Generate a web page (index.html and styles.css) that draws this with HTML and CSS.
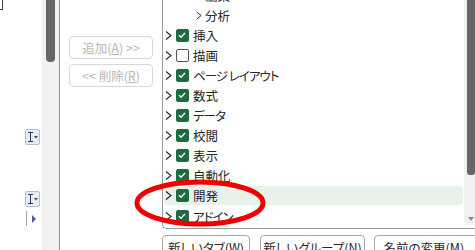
FILE: index.html
```html
<!DOCTYPE html>
<html lang="ja">
<head>
    <meta charset="UTF-8">
    <title>リボンのユーザー設定</title>
    <link rel="stylesheet" href="styles.css">
</head>
<body>
    <div class="side">
        <div class="corner"></div>
        <div class="ibeam first">
            <svg width="15" height="16" viewBox="0 0 15 16"><path d="M3 3.5h5M3 12.5h5M5.5 3.5v9" stroke="#2c3560" stroke-width="1" fill="none"/><path d="M9 7h4l-2 2.5z" fill="#3a4a8a"/></svg>
        </div>
        <div class="ibeam">
            <svg width="15" height="16" viewBox="0 0 15 16"><path d="M3 3.5h5M3 12.5h5M5.5 3.5v9" stroke="#2c3560" stroke-width="1" fill="none"/><path d="M9 7h4l-2 2.5z" fill="#3a4a8a"/></svg>
        </div>
        <div class="expander">
            <span class="rule"></span>
            <svg width="5" height="8" viewBox="0 0 5 8"><path d="M0 0l4 4-4 4z" fill="#4a5a9a"/></svg>
        </div>
    </div>
    <div class="vscroll"><div class="thumb"></div></div>
    <div class="divider"></div>
    <div class="move-buttons">
        <button class="move" disabled>追加(<u>A</u>) &gt;&gt;</button>
        <button class="move" disabled>&lt;&lt; 削除(<u>R</u>)</button>
    </div>
    <div class="tabs-panel">
        <div class="tree-box">
            <ul class="tree" id="tree"></ul>
            <div class="tree-scroll">
                <div class="thumb"></div>
                <span class="arrow"></span>
            </div>
        </div>
        <div class="actions">
            <button class="act new-tab">新しいタブ(<u>W</u>)</button>
            <button class="act new-group">新しいグループ(<u>N</u>)</button>
            <button class="act rename">名前の変更(<u>M</u>)...</button>
        </div>
    </div>
    <svg class="callout" width="140" height="54" viewBox="0 0 140 54">
        <ellipse cx="66" cy="25" rx="63" ry="21" fill="none" stroke="#ee0000" stroke-width="5"/>
    </svg>
    <script>
        const items = [
            { name: '編集', sub: true },
            { name: '分析', sub: true },
            { name: '挿入', on: true },
            { name: '描画', on: false },
            { name: 'ページ レイアウト', on: true, kana: true },
            { name: '数式', on: true },
            { name: 'データ', on: true, kana: true },
            { name: '校閲', on: true },
            { name: '表示', on: true },
            { name: '自動化', on: true },
            { name: '開発', on: true, selected: true },
            { name: 'アドイン', on: true, kana: true },
            { name: 'ヘルプ', on: true, kana: true }
        ];
        const chevron = '<svg class="chev" width="7" height="9" viewBox="0 0 7 9"><path d="M1 0.5l5 4-5 4" fill="none" stroke="#222" stroke-width="1.1"/></svg>';
        const tick = '<svg width="12" height="12" viewBox="0 0 12 12"><path d="M3 6.2l2 2 4-4.3" fill="none" stroke="#fff" stroke-width="1.4"/></svg>';
        const tree = document.getElementById('tree');
        items.forEach(item => {
            const li = document.createElement('li');
            li.className = item.sub ? 'row sub' : 'row';
            if (item.selected) li.classList.add('selected');
            let box = '';
            if (!item.sub) {
                box = item.on ? `<span class="check on">${tick}</span>` : '<span class="check"></span>';
            }
            const labelClass = item.kana ? 'label kana' : 'label';
            li.innerHTML = `${chevron}${box}<span class="${labelClass}">${item.name}</span>`;
            tree.appendChild(li);
        });
    </script>
</body>
</html>
```

FILE: styles.css
```css
body {
    margin: 0;
    width: 475px;
    height: 250px;
    overflow: hidden;
    display: flex;
    background: #fff;
    font-family: "Noto Sans CJK JP", "Noto Sans", sans-serif;
    font-feature-settings: "palt";
    font-size: 12px;
    color: #262626;
}
.side {
    width: 42px;
    flex-shrink: 0;
    display: flex;
    flex-direction: column;
    align-items: flex-start;
}
.corner {
    width: 2px;
    height: 9px;
    border-right: 1px solid #444;
    border-bottom: 1px solid #444;
}
.ibeam {
    margin-left: 25px;
    margin-top: 46px;
    width: 13px;
    height: 14px;
    border: 1px solid #b6bccb;
    border-radius: 2px;
    background: #e9ecf3;
    display: flex;
}
.ibeam svg {
    margin: -1px;
}
.ibeam.first {
    margin-top: 119px;
}
.expander {
    margin-left: 26px;
    margin-top: 4px;
    display: flex;
    align-items: center;
    gap: 5px;
}
.expander .rule {
    width: 1px;
    height: 15px;
    background: #a8a8a8;
}
.vscroll {
    width: 17px;
    flex-shrink: 0;
    background: #f1f1f1;
}
.vscroll .thumb {
    margin-left: 4px;
    width: 9px;
    height: 62px;
    background: #666;
    border-radius: 0 0 4px 4px;
}
.divider {
    width: 1px;
    flex-shrink: 0;
    background: #8c8c8c;
}
.move-buttons {
    width: 102px;
    flex-shrink: 0;
    display: flex;
    flex-direction: column;
    gap: 5px;
    padding-top: 36px;
    padding-left: 9px;
    box-sizing: border-box;
}
button {
    font-family: inherit;
    font-feature-settings: "palt";
    font-size: 12px;
    background: #fff;
    padding: 0;
    margin: 0;
}
.move {
    width: 84px;
    height: 23px;
    border: 1px solid #d8d8d8;
    border-radius: 4px;
    color: #b8b8b8;
    font-size: 12.5px;
}
.tabs-panel {
    width: 313px;
    flex-shrink: 0;
    display: flex;
    flex-direction: column;
}
.tree-box {
    height: 229px;
    flex-shrink: 0;
    box-sizing: border-box;
    border-left: 1px solid #9a9a9a;
    border-bottom: 1px solid #9a9a9a;
    border-bottom-left-radius: 5px;
    display: flex;
    overflow: hidden;
}
.tree {
    list-style: none;
    margin: -15px 0 0;
    padding: 0;
    flex: 1;
}
.row {
    height: 19px;
    margin: 1px;
    padding-left: 1px;
    display: flex;
    align-items: center;
    border-radius: 4px;
}
.row.selected {
    background: #e7f2eb;
    margin-top: 0;
    margin-bottom: 2px;
}
.row.sub {
    padding-left: 32px;
}
.chev {
    flex-shrink: 0;
    margin-right: 4px;
}
.row.sub .chev {
    width: 6px;
    margin-right: 3px;
}
.check {
    width: 11px;
    height: 11px;
    border: 1px solid #555;
    border-radius: 2px;
    margin-right: 4px;
    display: flex;
    flex-shrink: 0;
    background: #fff;
}
.check.on {
    background: #1d6b3f;
    border-color: #1d6b3f;
}
.check.on svg {
    margin: -1px;
}
.label {
    white-space: nowrap;
    line-height: 19px;
    font-size: 12.5px;
}
.label.kana {
    letter-spacing: -1px;
}
.tree-scroll {
    width: 11px;
    flex-shrink: 0;
    height: 225px;
    background: #f1f1f1;
    border-bottom-left-radius: 4px;
    position: relative;
}
.tree-scroll .thumb {
    margin-left: 3px;
    width: 8px;
    height: 175px;
    background: #666;
    border-radius: 0 0 3px 3px;
}
.tree-scroll .arrow {
    position: absolute;
    left: 4px;
    bottom: 4px;
    border-left: 3px solid transparent;
    border-right: 3px solid transparent;
    border-top: 4px solid #8a8a8a;
}
.actions {
    display: flex;
    flex-shrink: 0;
    gap: 10px;
    margin-top: 6px;
}
.act {
    height: 24px;
    border: 1px solid #a9a9a9;
    border-radius: 4px;
    color: #262626;
    font-size: 12.5px;
    flex-shrink: 0;
    white-space: nowrap;
}
.new-tab {
    width: 88px;
}
.new-group {
    width: 105px;
    margin-right: -1px;
}
.rename {
    width: 110px;
}
.callout {
    position: absolute;
    left: 134px;
    top: 178px;
}
```
